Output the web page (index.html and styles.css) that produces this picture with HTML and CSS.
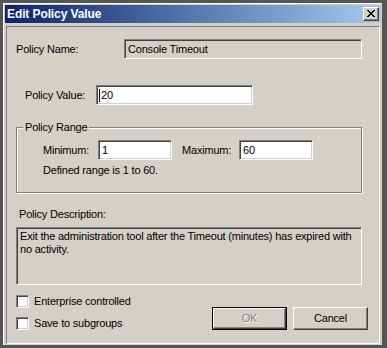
FILE: index.html
```html
<!DOCTYPE html>
<html>
<head>
<meta charset="utf-8">
<link rel="stylesheet" href="styles.css">
</head>
<body>
<div class="window">
  <div class="titlebar">
    <span class="title">Edit Policy Value</span>
    <span class="close-btn">
      <svg width="8" height="7" viewBox="0 0 8 7"><path d="M0 0h2v1h1v1h2V1h1V0h2v1H7v1H6v1H5v1h1v1h1v1h1v1H6V6H5V5H3v1H2v1H0V6h1V5h1V4h1V3H2V2H1V1H0z" fill="#000"/></svg>
    </span>
  </div>
  <div class="panel">
    <div class="row row-name">
      <span class="label label-name">Policy Name:</span>
      <div class="field field-name readonly">Console Timeout</div>
    </div>
    <div class="row row-value">
      <span class="label label-value">Policy Value:</span>
      <div class="field field-value"><span class="caret"></span>20</div>
    </div>
    <div class="groupbox">
      <span class="legend">Policy Range</span>
      <div class="row row-range">
        <span class="label label-min">Minimum:</span>
        <div class="field field-small">1</div>
        <span class="label label-max">Maximum:</span>
        <div class="field field-small">60</div>
      </div>
      <div class="range-note">Defined range is 1 to 60.</div>
    </div>
    <div class="desc-label">Policy Description:</div>
    <div class="field desc-box readonly">Exit the administration tool after the Timeout (minutes) has expired with no activity.</div>
    <div class="bottom">
      <div class="checks">
        <label class="check"><span class="box"></span><span class="check-text">Enterprise controlled</span></label>
        <label class="check"><span class="box"></span><span class="check-text">Save to subgroups</span></label>
      </div>
      <div class="buttons">
        <div class="btn btn-default"><div class="btn-inner disabled">OK</div></div>
        <div class="btn"><div class="btn-inner">Cancel</div></div>
      </div>
    </div>
  </div>
</div>
</body>
</html>
```

FILE: styles.css
```css
* { box-sizing: border-box; }
html, body {
  margin: 0;
  padding: 0;
  background: #555;
}
body {
  font-family: "Liberation Sans", Arial, sans-serif;
  font-size: 11px;
  letter-spacing: -0.2px;
  color: #000;
}
.window {
  width: 387px;
  height: 348px;
  background: #d4d0c8;
  border-style: solid;
  border-color: #555;
  border-width: 3px 5px 3px 3px;
  padding: 2px 1px 1px 2px;
  display: flex;
  flex-direction: column;
  box-shadow: inset 1px 1px 0 #fff;
}
.titlebar {
  height: 18px;
  flex: none;
  background: linear-gradient(to right, #0a246a, #a6caf0);
  display: flex;
  align-items: center;
  justify-content: space-between;
  padding: 0 2px 0 2px;
}
.title {
  color: #fff;
  font-weight: bold;
  font-size: 12px;
  letter-spacing: -0.1px;
  line-height: 18px;
}
.close-btn {
  width: 16px;
  height: 14px;
  background: #d4d0c8;
  border-style: solid;
  border-width: 1px;
  border-color: #fff #404040 #404040 #fff;
  box-shadow: inset -1px -1px 0 #808080;
  display: flex;
  align-items: center;
  justify-content: center;
  padding: 0 1px 1px 0;
}
.close-btn svg { display: block; }
.panel {
  flex: 1;
  margin: 3px 1px 0 1px;
  border-style: solid;
  border-width: 1px;
  border-color: #808080 #fff #fff #808080;
  display: flex;
  flex-direction: column;
}
.row {
  display: flex;
  align-items: center;
}
.label { line-height: 13px; white-space: nowrap; }
.field {
  background: #fff;
  border-style: solid;
  border-width: 1px;
  border-color: #808080 #fff #fff #808080;
  box-shadow: inset 1px 1px 0 #404040, inset -1px -1px 0 #d4d0c8;
  height: 20px;
  line-height: 18px;
  padding: 0 2px 0 3px;
  white-space: nowrap;
  display: flex;
  align-items: center;
}
.field.readonly { background: #d4d0c8; }
.row-name { margin-top: 12px; padding-left: 9px; }
.label-name { width: 108px; }
.field-name { width: 238px; }
.row-value { margin-top: 26px; padding-left: 18px; }
.label-value { width: 71px; }
.field-value { width: 157px; }
.caret {
  width: 1px;
  height: 13px;
  background: #000;
  margin-right: 1px;
  margin-left: -1px;
}
.groupbox {
  position: relative;
  margin: 22px 0 0 9px;
  width: 346px;
  height: 66px;
  border: 1px solid #808080;
  box-shadow: 1px 1px 0 #fff, inset 1px 1px 0 #fff;
  padding: 12px 0 0 26px;
}
.legend {
  position: absolute;
  left: 6px;
  top: -7px;
  padding: 0 2px;
  background: #d4d0c8;
  line-height: 13px;
}
.label-min { width: 55px; }
.field-small { width: 74px; }
.label-max { width: 57px; margin-left: 10px; }
.range-note { margin-top: 4px; line-height: 13px; }
.desc-label {
  margin: 15px 0 0 12px;
  line-height: 13px;
}
.desc-box {
  margin: 6px 0 0 9px;
  width: 346px;
  height: 58px;
  display: block;
  white-space: normal;
  line-height: 13px;
  padding: 2px 4px 0 3px;
}
.bottom {
  display: flex;
  justify-content: space-between;
  padding: 0 11px 0 9px;
}
.checks {
  display: flex;
  flex-direction: column;
  gap: 9px;
  padding-top: 10px;
}
.check {
  display: flex;
  align-items: center;
  gap: 5px;
  line-height: 13px;
}
.box {
  width: 13px;
  height: 13px;
  background: #fff;
  border-style: solid;
  border-width: 1px;
  border-color: #808080 #fff #fff #808080;
  box-shadow: inset 1px 1px 0 #404040, inset -1px -1px 0 #d4d0c8;
}
.buttons {
  display: flex;
  gap: 6px;
  margin-top: 22px;
  align-self: flex-start;
}
.btn {
  width: 75px;
  height: 23px;
  border-style: solid;
  border-width: 1px;
  border-color: #fff #404040 #404040 #fff;
  box-shadow: inset -1px -1px 0 #808080;
  display: flex;
}
.btn-default {
  border: 1px solid #000;
  box-shadow: none;
}
.btn-default .btn-inner {
  border-style: solid;
  border-width: 1px;
  border-color: #fff #404040 #404040 #fff;
  box-shadow: inset -1px -1px 0 #808080;
}
.btn-inner {
  flex: 1;
  display: flex;
  align-items: center;
  justify-content: center;
  line-height: 13px;
}
.btn-inner.disabled {
  color: #808080;
  text-shadow: 1px 1px 0 #fff;
}
```
